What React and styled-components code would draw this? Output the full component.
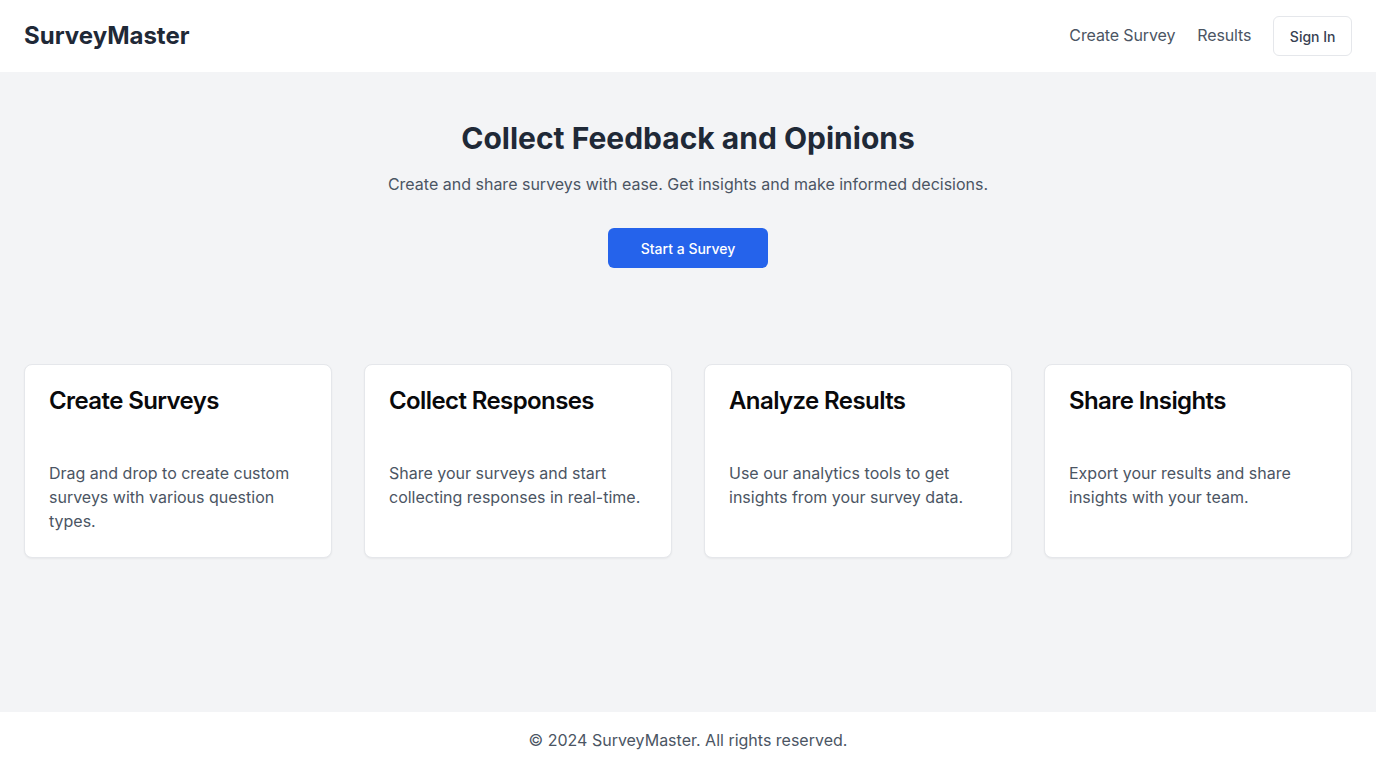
import React from "react";
import styled, { createGlobalStyle } from "styled-components";

const GlobalStyle = createGlobalStyle`
  * { box-sizing: border-box; }
  html, body { margin: 0; padding: 0; }
  body {
    font-family: Inter, "Noto Sans", sans-serif;
    color: #1f2937;
    background: #ffffff;
    -webkit-font-smoothing: antialiased;
  }
  h1, h2, h3, p { margin: 0; }
`;

const Page = styled.div`
  min-height: 100vh;
  display: flex;
  flex-direction: column;
`;

const Header = styled.header`
  height: 72px;
  display: flex;
  align-items: center;
  justify-content: space-between;
  padding: 0 24px;
  background: #ffffff;
`;

const Logo = styled.div`
  font-size: 24px;
  line-height: 32px;
  font-weight: 700;
  color: #1f2937;
`;

const Nav = styled.nav`
  display: flex;
  align-items: center;
  gap: 22px;
`;

const NavLink = styled.a`
  font-size: 16px;
  line-height: 24px;
  padding-bottom: 2px;
  letter-spacing: -0.12px;
  color: #4b5563;
  text-decoration: none;
  cursor: pointer;
`;

const OutlineButton = styled.button`
  height: 40px;
  padding: 0 15.5px;
  border: 1px solid #e5e7eb;
  border-radius: 6px;
  background: #ffffff;
  font-family: inherit;
  font-size: 14px;
  font-weight: 500;
  color: #374151;
  cursor: pointer;
`;

const Main = styled.main`
  flex: 1;
  background: #f3f4f6;
`;

const Hero = styled.section`
  padding: 48px 24px;
  display: flex;
  flex-direction: column;
  align-items: center;
  text-align: center;
`;

const HeroTitle = styled.h1`
  font-size: 30px;
  line-height: 36px;
  font-weight: 700;
  color: #1f2937;
`;

const HeroText = styled.p`
  margin-top: 16px;
  font-size: 16px;
  line-height: 24px;
  color: #4b5563;
`;

const PrimaryButton = styled.button`
  margin-top: 32px;
  width: 160px;
  height: 40px;
  border: none;
  border-radius: 6px;
  background: #2563eb;
  color: #ffffff;
  font-family: inherit;
  font-size: 14px;
  font-weight: 500;
  cursor: pointer;
`;

const Features = styled.section`
  padding: 48px 24px;
  display: grid;
  grid-template-columns: repeat(4, 1fr);
  gap: 32px;
`;

const Card = styled.div`
  background: #ffffff;
  border: 1px solid #e5e7eb;
  border-radius: 8px;
  box-shadow: 0 1px 2px rgba(0, 0, 0, 0.05);
  display: flex;
  flex-direction: column;
`;

const CardHeader = styled.div`
  padding: 24px 24px 48px;
`;

const CardTitle = styled.h3`
  font-size: 24px;
  line-height: 24px;
  font-weight: 600;
  letter-spacing: -0.6px;
  color: #09090b;
`;

const CardBody = styled.div`
  padding: 0 24px 24px;
`;

const CardText = styled.p`
  font-size: 16px;
  line-height: 24px;
  color: #4b5563;
`;

const Footer = styled.footer`
  background: #ffffff;
  padding: 16px 24px;
  text-align: center;
  font-size: 16px;
  line-height: 24px;
  color: #4b5563;
`;

const features = [
  {
    title: "Create Surveys",
    text: "Drag and drop to create custom surveys with various question types.",
  },
  {
    title: "Collect Responses",
    text: "Share your surveys and start collecting responses in real-time.",
  },
  {
    title: "Analyze Results",
    text: "Use our analytics tools to get insights from your survey data.",
  },
  {
    title: "Share Insights",
    text: "Export your results and share insights with your team.",
  },
];

export default function App() {
  return (
    <>
      <GlobalStyle />
      <Page>
        <Header>
          <Logo>SurveyMaster</Logo>
          <Nav>
            <NavLink>Create Survey</NavLink>
            <NavLink>Results</NavLink>
            <OutlineButton>Sign In</OutlineButton>
          </Nav>
        </Header>
        <Main>
          <Hero>
            <HeroTitle>Collect Feedback and Opinions</HeroTitle>
            <HeroText>
              Create and share surveys with ease. Get insights and make informed decisions.
            </HeroText>
            <PrimaryButton>Start a Survey</PrimaryButton>
          </Hero>
          <Features>
            {features.map((f) => (
              <Card key={f.title}>
                <CardHeader>
                  <CardTitle>{f.title}</CardTitle>
                </CardHeader>
                <CardBody>
                  <CardText>{f.text}</CardText>
                </CardBody>
              </Card>
            ))}
          </Features>
        </Main>
        <Footer>© 2024 SurveyMaster. All rights reserved.</Footer>
      </Page>
    </>
  );
}
